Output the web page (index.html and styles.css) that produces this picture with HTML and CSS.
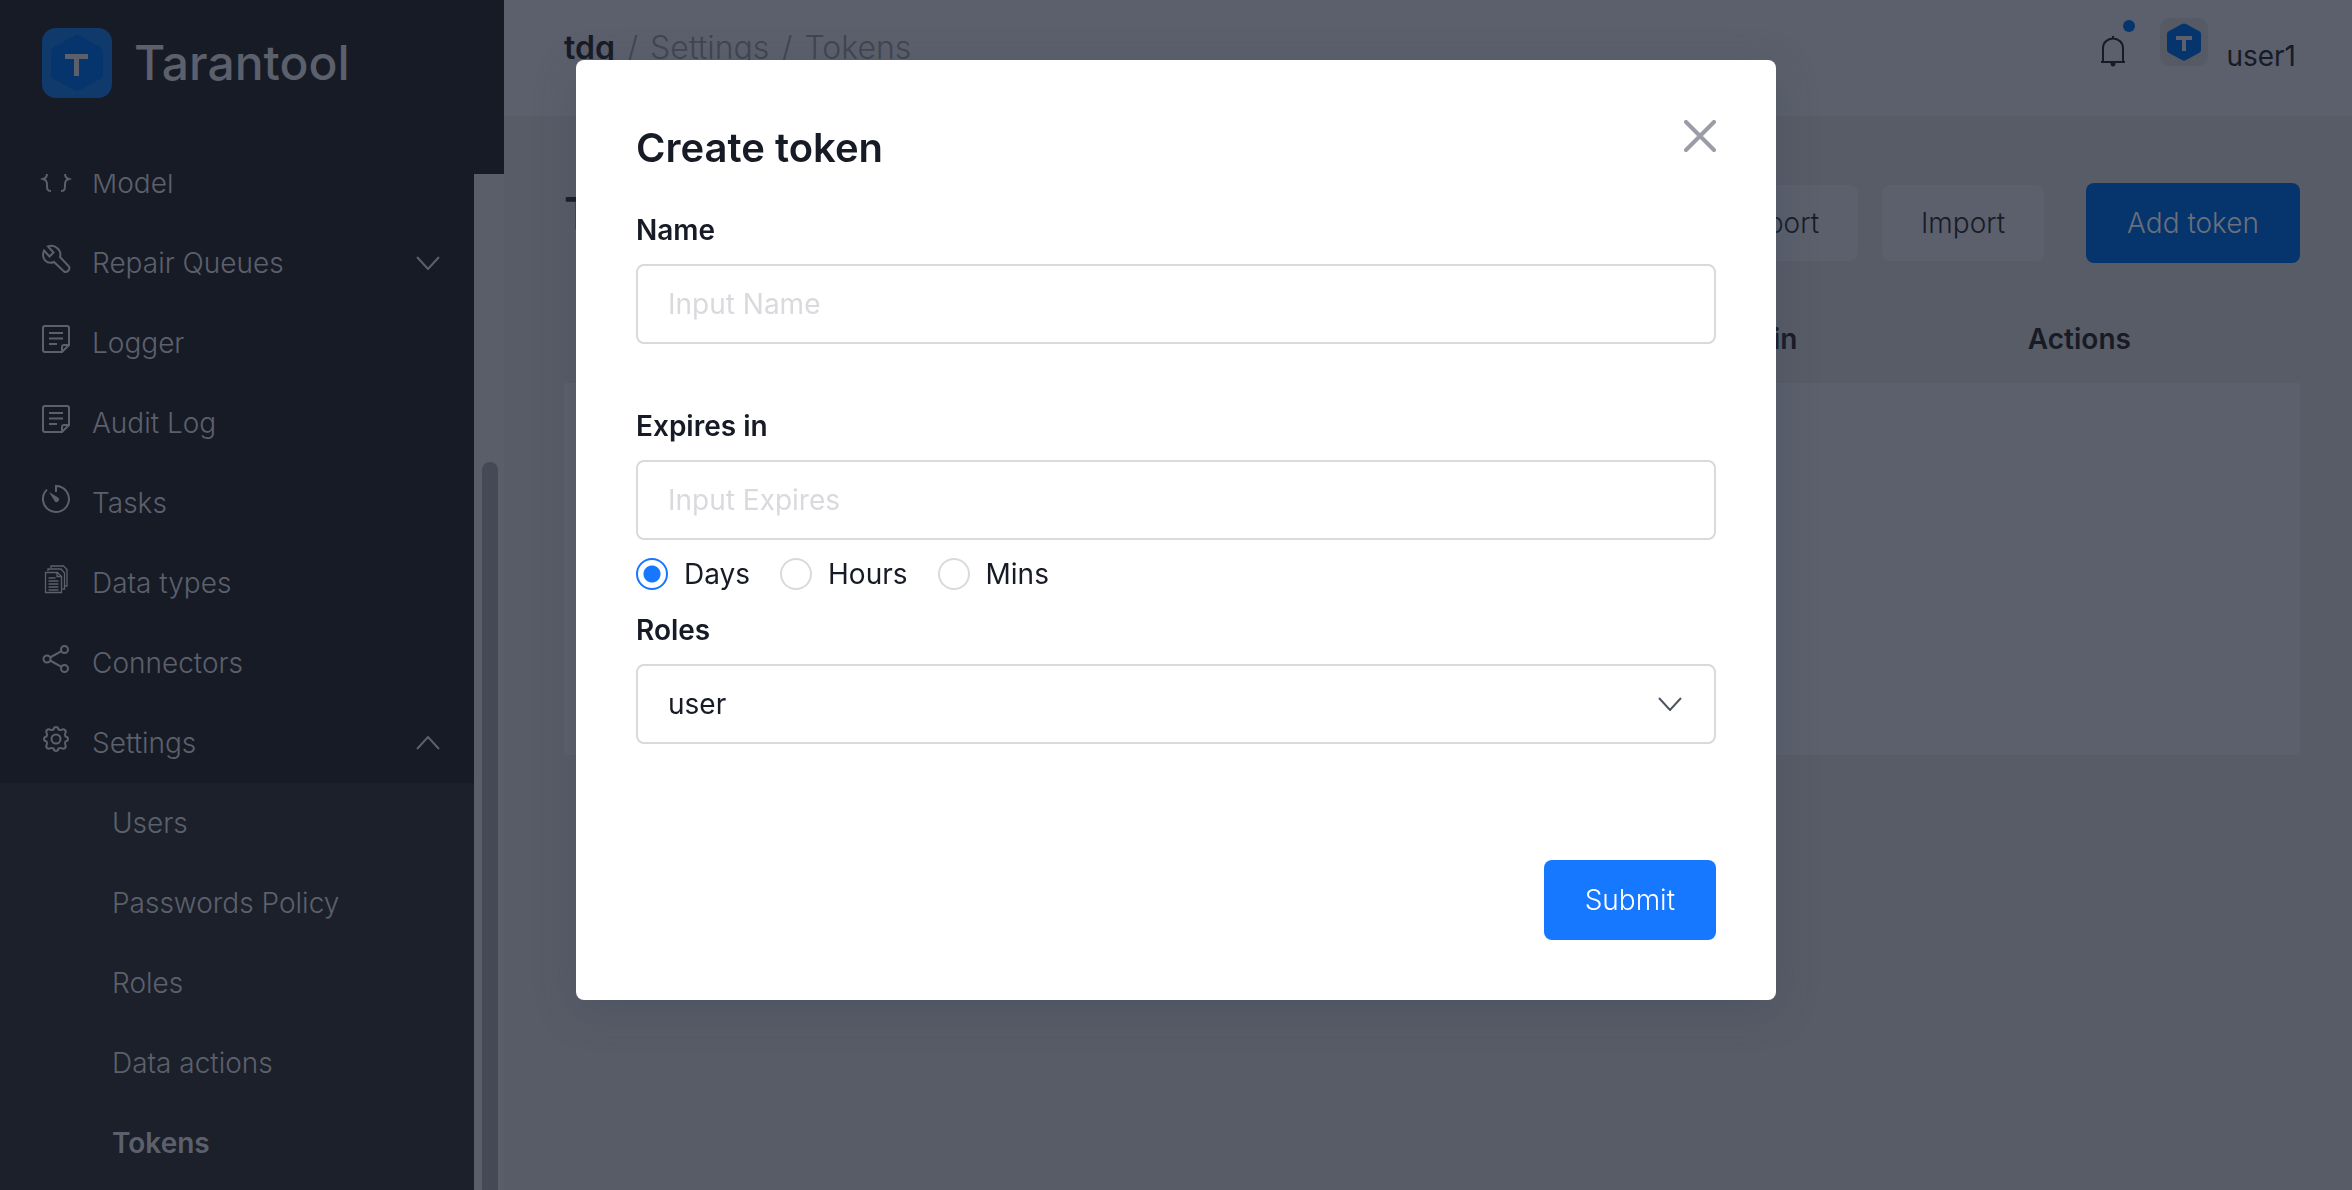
FILE: index.html
```
<!DOCTYPE html>
<html lang="en">
<head>
    <meta charset="UTF-8">
    <meta name="viewport" content="width=device-width, initial-scale=1.0">
    <title>Tarantool</title>
    <link rel="stylesheet" href="styles.css">
</head>
<body>
    <div class="app">
        <aside class="sidebar">
            <div class="brand">
                <svg class="brand-logo" viewBox="0 0 70 70">
                    <rect width="70" height="70" rx="14" fill="#103a6b"/>
                    <path d="M32 8q3-2 6 0l20 11q3 2 3 5v22q0 3-3 5L38 62q-3 2-6 0L12 51q-3-2-3-5V24q0-3 3-5z" fill="#05356c"/>
                    <path d="M23 26h23v5h-9v17h-5V31h-9z" fill="#5c606c"/>
                </svg>
                <span class="brand-name">Tarantool</span>
            </div>
            <div class="scroll">
            <nav class="menu">
                <a class="item" href="#">
                    <svg class="icon" viewBox="0 0 28 28"><path d="M8 2C4 2 5 4 5 8c0 4-1 5-4 6 3 1 4 2 4 6s0 6 4 6M20 2c4 0 3 2 3 6 0 4 1 5 4 6-3 1-4 2-4 6s0 6-4 6"/></svg>
                    <span>Model</span>
                </a>
                <a class="item" href="#">
                    <svg class="icon" viewBox="0 0 28 28"><path d="M2 5.500l5.500 6 4-4-5.500-6C13-1 20 5 18 12l9 9.500c1.500 3-2 6.500-5 5L12 17C4 20-1 13 2 5.500z"/></svg>
                    <span>Repair Queues</span>
                    <svg class="chevron" viewBox="0 0 24 14"><path d="M1 1l11 12L23 1"/></svg>
                </a>
                <a class="item" href="#">
                    <svg class="icon" viewBox="0 0 28 28"><path d="M3 1h22q2 0 2 2v17l-7 7H3q-2 0-2-2V3q0-2 2-2zM20 27v-5q0-2 2-2h5M7 8h14M7 13.500h14M7 19h8"/></svg>
                    <span>Logger</span>
                </a>
                <a class="item" href="#">
                    <svg class="icon" viewBox="0 0 28 28"><path d="M3 1h22q2 0 2 2v17l-7 7H3q-2 0-2-2V3q0-2 2-2zM20 27v-5q0-2 2-2h5M7 8h14M7 13.500h14M7 19h8"/></svg>
                    <span>Audit Log</span>
                </a>
                <a class="item" href="#">
                    <svg class="icon" viewBox="0 0 28 28"><path d="M14 7V1a13 13 0 1 1-9 3.600"/><path d="M7 7l9 5.500a2.500 2.500 0 1 1-3.500 3.500z" class="solid"/></svg>
                    <span>Tasks</span>
                </a>
                <a class="item" href="#">
                    <svg class="icon thin" viewBox="0 0 28 28"><path d="M3.500 7.500h12l4 4v16h-16zM15 7.500v4h4M6 6V4h13l3.500 4v16h-2M9 3V1h12.500L25 4.500V21h-2M6.500 13h7M6.500 16h10M6.500 19h10M6.500 22h10M6.500 25h10"/></svg>
                    <span>Data types</span>
                </a>
                <a class="item" href="#">
                    <svg class="icon" viewBox="0 0 28 28"><circle cx="5" cy="14" r="3.500"/><circle cx="22.500" cy="4.500" r="3.500"/><circle cx="22.500" cy="23.500" r="3.500"/><path d="M8 12.500l11.500-6.300M8 15.500l11.500 6.300"/></svg>
                    <span>Connectors</span>
                </a>
                <a class="item" href="#">
                    <svg class="icon" viewBox="0 0 28 28"><path d="M11.500 4.500Q12 2 14 2t2.500 2.500q2 1 3 .3 2-1.200 3.500.2t.2 3.500q-.7 1 .3 3 2.500.5 2.500 2.500t-2.500 2.500q-1 2-.3 3 1.200 2-.2 3.500t-3.500.2q-1-.7-3 .3Q16 26 14 26t-2.500-2.500q-2-1-3-.3-2 1.200-3.500-.2t-.2-3.500q.7-1-.3-3Q2 16 2 14t2.500-2.500q1-2 .3-3Q3.600 6.500 5 5t3.500-.2q1 .7 3-.3z"/><circle cx="14" cy="14" r="4.500"/></svg>
                    <span>Settings</span>
                    <svg class="chevron" viewBox="0 0 24 14"><path d="M1 13L12 1l11 12"/></svg>
                </a>
                <div class="submenu">
                    <a class="item" href="#">Users</a>
                    <a class="item" href="#">Passwords Policy</a>
                    <a class="item" href="#">Roles</a>
                    <a class="item" href="#">Data actions</a>
                    <a class="item current" href="#">Tokens</a>
                </div>
            </nav>
            <div class="track"><div class="thumb"></div></div>
            </div>
        </aside>

        <div class="page">
            <header class="header">
                <nav class="crumbs">
                    <a class="project" href="#">tdg</a>
                    <span>/</span>
                    <a href="#">Settings</a>
                    <span>/</span>
                    <a href="#">Tokens</a>
                </nav>
                <div class="account">
                    <button class="bell" aria-label="Notifications">
                        <svg viewBox="0 0 26 34"><path d="M13 2v3M3 28V14a10 9.500 0 0 1 20 0v14M1 28h24"/><path d="M10.500 29h5a2.500 3.500 0 0 1-5 0z" fill="#171b26" stroke="none"/></svg>
                        <span class="dot"></span>
                    </button>
                    <svg class="avatar" viewBox="0 0 48 48">
                        <rect width="48" height="48" rx="10" fill="#565a65"/>
                        <path d="M22 6q2-1 4 0l13 7q2 1 2 3v16q0 2-2 3l-13 7q-2 1-4 0L9 35q-2-1-2-3V16q0-2 2-3z" fill="#05356c"/>
                        <path d="M16 18h16v4h-6v11h-4V22h-6z" fill="#5c606c"/>
                    </svg>
                    <span class="user">user1</span>
                </div>
            </header>

            <main class="content">
                <div class="toolbar">
                    <h1>Tokens</h1>
                    <div class="actions">
                        <button class="btn plain">Export</button>
                        <button class="btn plain">Import</button>
                        <button class="btn add">Add token</button>
                    </div>
                </div>
                <table class="tokens">
                    <thead>
                        <tr><th>Name</th><th>Created</th><th>Expires in</th><th>Last login</th><th>Actions</th></tr>
                    </thead>
                    <tbody>
                        <tr><td colspan="5"></td></tr>
                    </tbody>
                </table>
            </main>
        </div>
    </div>

    <div class="overlay">
        <form class="modal">
            <div class="modal-head">
                <h2>Create token</h2>
                <button class="close" type="button" aria-label="Close">
                    <svg viewBox="0 0 32 32"><path d="M2 2l28 28M30 2L2 30"/></svg>
                </button>
            </div>
            <div class="field">
                <label for="name">Name</label>
                <input class="control" type="text" id="name" placeholder="Input Name">
            </div>
            <div class="field expires">
                <label for="expires">Expires in</label>
                <input class="control" type="text" id="expires" placeholder="Input Expires">
            </div>
            <div class="units">
                <label><input type="radio" name="unit" checked>Days</label>
                <label><input type="radio" name="unit">Hours</label>
                <label><input type="radio" name="unit">Mins</label>
            </div>
            <div class="field">
                <label for="roles">Roles</label>
                <div class="select">
                    <select class="control" id="roles">
                        <option>user</option>
                    </select>
                    <svg class="chevron" viewBox="0 0 24 14"><path d="M1 1l11 12L23 1"/></svg>
                </div>
            </div>
            <div class="modal-foot">
                <button class="btn submit" type="submit">Submit</button>
            </div>
        </form>
    </div>
</body>
</html>
```
FILE: styles.css
```
*{
    box-sizing: border-box;
}
body{
    margin: 0;
    font-family: Inter, "Liberation Sans", sans-serif;
    font-size: 28px;
    line-height: 40px;
    color: #171b26;
    overflow: hidden;
}
a{
    color: inherit;
    text-decoration: none;
}
button, input, select{
    font: inherit;
    color: inherit;
}
svg{
    fill: none;
    stroke-width: 2;
}
.app{
    display: flex;
    height: 100vh;
    background-color: #585c67;
}

/* sidebar */
.sidebar{
    display: flex;
    flex-direction: column;
    width: 504px;
    flex-shrink: 0;
    background-color: #171b26;
    color: #5c606c;
}
.brand{
    display: flex;
    align-items: center;
    gap: 22px;
    height: 174px;
    flex-shrink: 0;
    padding: 0 42px 48px;
}
.brand-logo{
    width: 70px;
    height: 70px;
}
.brand-name{
    font-size: 48px;
    font-weight: 500;
}
.scroll{
    display: flex;
    flex: 1;
    min-height: 0;
}
.menu{
    display: flex;
    flex-direction: column;
    justify-content: flex-end;
    flex: 1;
    overflow: hidden;
    font-weight: 350;
}
.item{
    display: flex;
    align-items: center;
    flex-shrink: 0;
    height: 80px;
    padding: 0 34px 0 42px;
}
.icon{
    width: 28px;
    height: 28px;
    margin: 0 22px 8px 0;
    stroke: currentColor;
    overflow: visible;
}
.thin{
    stroke-width: 1.3;
}
.solid{
    fill: currentColor;
    stroke: none;
}
.chevron{
    width: 24px;
    height: 14px;
    margin-left: auto;
    stroke: currentColor;
}
.submenu{
    flex-shrink: 0;
    padding-bottom: 7px;
    background-color: #1c202b;
}
.submenu .item{
    padding-left: 112px;
}
.submenu .current{
    font-weight: 600;
}
.track{
    width: 30px;
    padding: 288px 6px 0 8px;
    background-color: #5a5e69;
}
.thumb{
    height: 100%;
    border-radius: 8px 8px 0 0;
    background-color: #434955;
}

/* page */
.page{
    flex: 1;
    min-width: 0;
}
.header{
    display: flex;
    justify-content: space-between;
    height: 116px;
    padding: 18px 56px 0 60px;
    background-color: #5c606c;
}
.crumbs{
    display: flex;
    gap: 12px;
    padding-top: 10px;
    font-size: 32px;
    font-weight: 350;
    color: #41454f;
}
.project{
    font-weight: 600;
    color: #171b26;
}
.account{
    display: flex;
    align-items: flex-start;
}
.bell{
    position: relative;
    width: 26px;
    height: 34px;
    margin: 16px 34px 0 0;
    padding: 0;
    border: none;
    background: none;
}
.bell svg{
    display: block;
    stroke: #171b26;
}
.dot{
    position: absolute;
    top: -14px;
    right: -9px;
    width: 12px;
    height: 12px;
    border-radius: 50%;
    background-color: #05356c;
}
.avatar{
    width: 48px;
    height: 48px;
    margin-right: 18px;
}
.user{
    padding-top: 18px;
}
.content{
    padding: 67px 52px 0 60px;
}
.toolbar{
    display: flex;
    align-items: flex-start;
    justify-content: space-between;
}
h1{
    margin: 0;
    font-size: 44px;
    line-height: 60px;
    font-weight: 600;
}
.actions{
    display: flex;
    align-items: center;
    gap: 24px;
}
.btn{
    height: 80px;
    padding: 0 41px;
    border: none;
    border-radius: 8px;
    font-weight: 350;
}
.plain{
    height: 76px;
    padding: 0 39px;
    background-color: #5c606c;
}
.add{
    margin-left: 18px;
    background-color: #05356c;
    color: #6b6f7a;
}
.tokens{
    width: 100%;
    margin-top: 32px;
    border-collapse: collapse;
    table-layout: fixed;
}
.tokens th{
    height: 88px;
    padding: 0 94px 0 0;
    font-weight: 600;
}
.tokens td{
    height: 372px;
    background-color: #5c606c;
}

/* modal */
.overlay{
    position: fixed;
    inset: 0;
    display: flex;
    justify-content: center;
    align-items: flex-start;
    padding-top: 60px;
}
.modal{
    width: 1200px;
    max-width: 100%;
    padding: 60px;
    border-radius: 8px;
    background-color: #fff;
    box-shadow: 0 10px 40px rgba(50, 70, 90, 0.3);
}
.modal-head{
    display: flex;
    justify-content: space-between;
    margin-bottom: 42px;
}
h2{
    margin: 8px 0 0;
    font-size: 40px;
    line-height: 40px;
    font-weight: 600;
}
.close{
    width: 32px;
    height: 32px;
    padding: 0;
    border: none;
    background: none;
}
.close svg{
    display: block;
    stroke: #9b9da6;
    stroke-width: 4;
    stroke-linecap: round;
}
.field label{
    display: block;
    margin-bottom: 14px;
    font-weight: 600;
}
.control{
    display: block;
    width: 100%;
    height: 80px;
    padding: 0 30px;
    border: 2px solid #d9dade;
    border-radius: 8px;
    background-color: #fff;
}
.control::placeholder{
    color: #d9dade;
    opacity: 1;
}
.expires{
    margin-top: 62px;
}
.units{
    display: flex;
    gap: 30px;
    margin: 14px 0 16px;
}
.units label{
    display: flex;
    align-items: center;
    gap: 16px;
}
.units input{
    appearance: none;
    width: 32px;
    height: 32px;
    margin: 0;
    border: 2px solid #d9dade;
    border-radius: 50%;
}
.units input:checked{
    border-color: #1677ff;
    background: radial-gradient(circle, #1677ff 8px, #fff 9px);
}
.select{
    position: relative;
}
.select select{
    appearance: none;
}
.select .chevron{
    position: absolute;
    top: 33px;
    right: 34px;
    color: #4f5460;
}
.modal-foot{
    display: flex;
    justify-content: flex-end;
    margin-top: 116px;
}
.submit{
    background-color: #1677ff;
    color: #fff;
}
```
